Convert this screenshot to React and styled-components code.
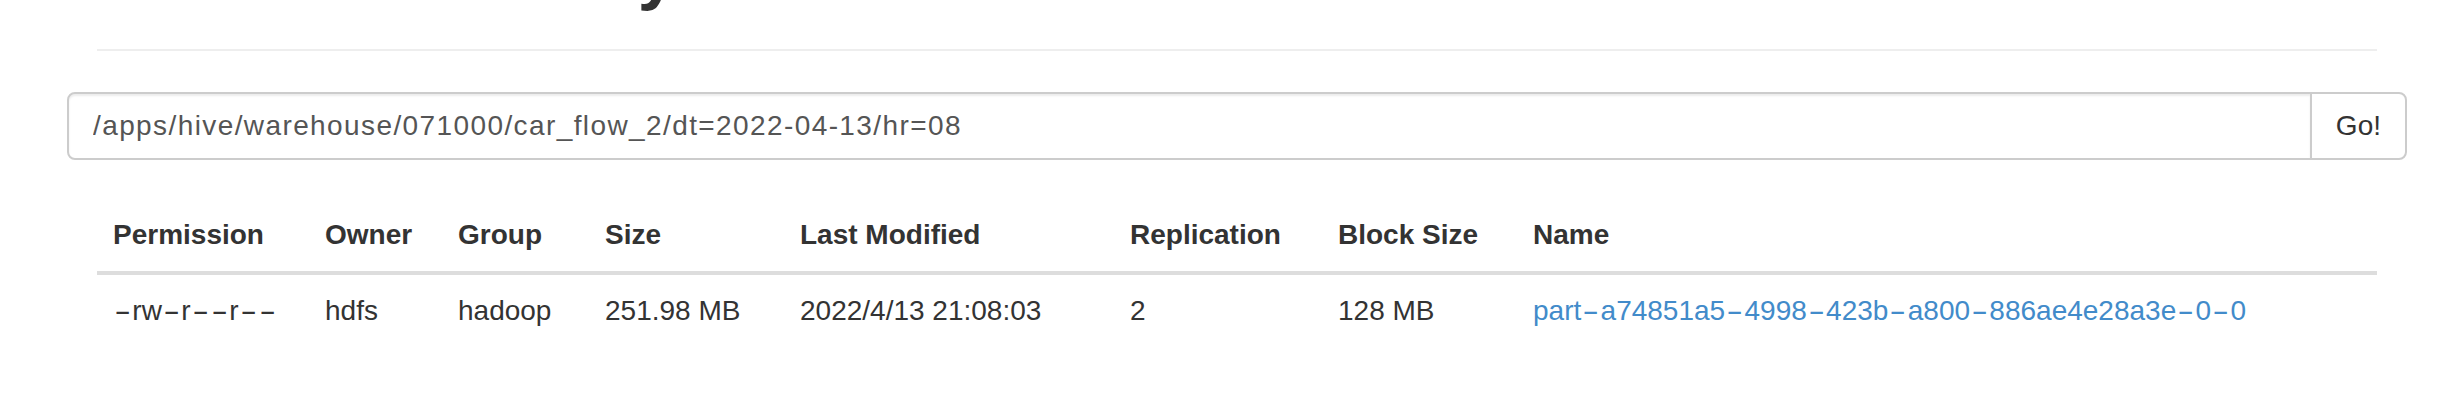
import React from "react";
import styled, { createGlobalStyle } from "styled-components";

const GlobalStyle = createGlobalStyle`
  html, body {
    margin: 0;
    padding: 0;
    background: #ffffff;
    font-family: "Liberation Sans", Arial, sans-serif;
    font-size: 28px;
    line-height: 40px;
    color: #333333;
  }
  * {
    box-sizing: border-box;
  }
`;

const Container = styled.div`
  width: 2340px;
  margin-left: 67px;
  height: 420px;
  overflow: hidden;
`;

const PageHeader = styled.div`
  margin: -66px 30px 0;
  padding-bottom: 18px;
  border-bottom: 2px solid #eeeeee;
`;

const Title = styled.h1`
  margin: 0 0 20px;
  font-size: 70px;
  line-height: 77px;
  font-weight: 700;
  color: #333333;
`;

const InputGroup = styled.form`
  display: flex;
  margin: 41px 0 0;
  height: 68px;
`;

const PathInput = styled.input`
  flex: 1;
  height: 68px;
  padding: 12px 24px;
  font-family: inherit;
  font-size: 28px;
  line-height: 40px;
  letter-spacing: 1.4px;
  color: #555555;
  background: #ffffff;
  border: 2px solid #cccccc;
  border-radius: 8px 0 0 8px;
  box-shadow: inset 0 2px 2px rgba(0, 0, 0, 0.075);
  outline: none;
`;

const GoButton = styled.button`
  height: 68px;
  margin-left: -2px;
  padding: 12px 24px;
  font-family: inherit;
  font-size: 28px;
  line-height: 40px;
  color: #333333;
  background: #ffffff;
  border: 2px solid #cccccc;
  border-radius: 0 8px 8px 0;
`;

const Table = styled.table`
  margin: 39px 30px 0;
  width: 2280px;
  border-collapse: collapse;
  border-spacing: 0;
`;

const Th = styled.th`
  width: ${(p) => p.$w}px;
  padding: 16px;
  text-align: left;
  font-weight: 700;
  line-height: 40px;
  border-bottom: 4px solid #dddddd;
  white-space: nowrap;
`;

const Td = styled.td`
  padding: 16px;
  line-height: 40px;
  vertical-align: top;
  white-space: nowrap;
`;

const FileLink = styled.a`
  color: #428bca;
  text-decoration: none;
`;

// the source font draws its hyphen as a long dash
const Dash = styled.span`
  display: inline-block;
  margin: 0 5px;
  transform: scaleX(1.8);
`;

const withDashes = (text) =>
  text.split("-").flatMap((part, i) =>
    i === 0 ? [part] : [<Dash key={i}>-</Dash>, part]
  );

const columns = [
  ["Permission", 212],
  ["Owner", 133],
  ["Group", 147],
  ["Size", 195],
  ["Last Modified", 330],
  ["Replication", 208],
  ["Block Size", 195],
  ["Name", 860],
];

const files = [
  {
    permission: "-rw-r--r--",
    owner: "hdfs",
    group: "hadoop",
    size: "251.98 MB",
    modified: "2022/4/13 21:08:03",
    replication: "2",
    blockSize: "128 MB",
    name: "part-a74851a5-4998-423b-a800-886ae4e28a3e-0-0",
  },
];

const App = () => (
  <>
    <GlobalStyle />
    <Container>
      <PageHeader>
        <Title>Browse Directory</Title>
      </PageHeader>
      <InputGroup onSubmit={(e) => e.preventDefault()}>
        <PathInput
          type="text"
          defaultValue="/apps/hive/warehouse/071000/car_flow_2/dt=2022-04-13/hr=08"
        />
        <GoButton type="button">Go!</GoButton>
      </InputGroup>
      <Table>
        <thead>
          <tr>
            {columns.map(([label, w]) => (
              <Th key={label} $w={w}>
                {label}
              </Th>
            ))}
          </tr>
        </thead>
        <tbody>
          {files.map((f) => (
            <tr key={f.name}>
              <Td>{withDashes(f.permission)}</Td>
              <Td>{f.owner}</Td>
              <Td>{f.group}</Td>
              <Td>{f.size}</Td>
              <Td>{f.modified}</Td>
              <Td>{f.replication}</Td>
              <Td>{f.blockSize}</Td>
              <Td>
                <FileLink href="#">{withDashes(f.name)}</FileLink>
              </Td>
            </tr>
          ))}
        </tbody>
      </Table>
    </Container>
  </>
);

export default App;
